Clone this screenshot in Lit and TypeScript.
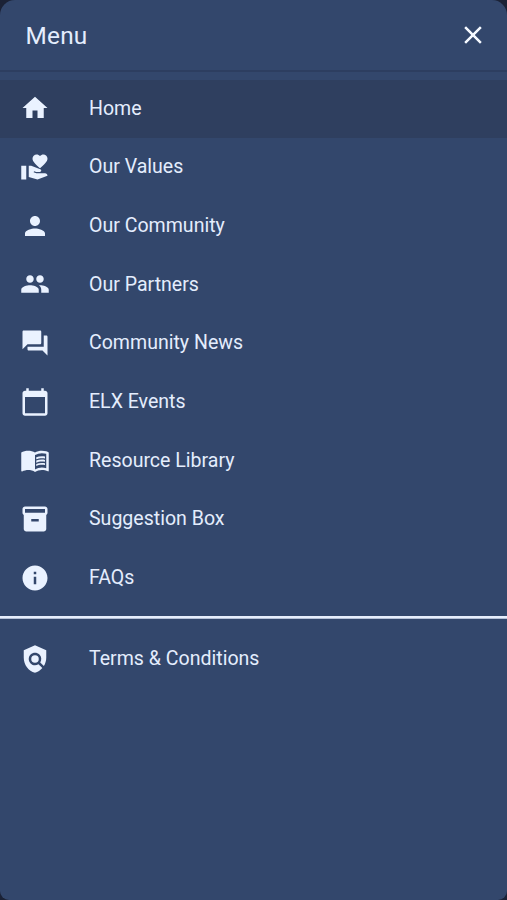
import { LitElement, html, svg, css } from "lit";
import { customElement } from "lit/decorators.js";

const icons: Record<string, string[]> = {
  home: ["M10 20v-6h4v6h5v-8h3L12 3 2 12h3v8z"],
  values: [
    "M1 11h4v11H1z",
    "M16 3.25C16.65 2.49 17.66 2 18.7 2 20.55 2 22 3.45 22 5.3c0 2.27-2.91 4.9-6 7.7-3.09-2.81-6-5.44-6-7.7C10 3.45 11.45 2 13.3 2c1.04 0 2.05.49 2.7 1.25z",
    "M20 17h-7l-2.09-.73.33-.94L13 16h2.82c.65 0 1.18-.53 1.18-1.18 0-.49-.31-.93-.77-1.11L8.97 11H7v9.02L14 22l8.01-3c-.01-1.1-.9-2-2.01-2z",
  ],
  person: ["M12 12c2.21 0 4-1.79 4-4s-1.79-4-4-4-4 1.79-4 4 1.79 4 4 4zm0 2c-2.67 0-8 1.34-8 4v2h16v-2c0-2.66-5.33-4-8-4z"],
  people: ["M16 11c1.66 0 2.99-1.34 2.99-3S17.66 5 16 5c-1.66 0-3 1.34-3 3s1.34 3 3 3zm-8 0c1.66 0 2.99-1.34 2.99-3S9.66 5 8 5C6.34 5 5 6.34 5 8s1.34 3 3 3zm0 2c-2.33 0-7 1.17-7 3.5V19h14v-2.5c0-2.33-4.67-3.5-7-3.5zm8 0c-.29 0-.62.02-.97.05 1.16.84 1.97 1.97 1.97 3.45V19h6v-2.5c0-2.33-4.67-3.5-7-3.5z"],
  forum: ["M21 6h-2v9H6v2c0 .55.45 1 1 1h11l4 4V7c0-.55-.45-1-1-1zm-4 6V3c0-.55-.45-1-1-1H3c-.55 0-1 .45-1 1v14l4-4h10c.55 0 1-.45 1-1z"],
  calendar: ["M20 3h-1V1h-2v2H7V1H5v2H4c-1.1 0-2 .9-2 2v16c0 1.1.9 2 2 2h16c1.1 0 2-.9 2-2V5c0-1.1-.9-2-2-2zm0 18H4V8h16v13z"],
  book: [
    "M21 5c-1.11-.35-2.33-.5-3.5-.5-1.95 0-4.05.4-5.5 1.5-1.45-1.1-3.55-1.5-5.5-1.5S2.45 4.9 1 6v14.65c0 .25.25.5.5.5.1 0 .15-.05.25-.05C3.1 20.45 5.05 20 6.5 20c1.95 0 4.05.4 5.5 1.5 1.35-.85 3.8-1.5 5.5-1.5 1.65 0 3.35.3 4.75 1.05.1.05.15.05.25.05.25 0 .5-.25.5-.5V6c-.6-.45-1.25-.75-2-1zm0 13.5c-1.1-.35-2.3-.5-3.5-.5-1.7 0-4.15.65-5.5 1.5V8c1.35-.85 3.8-1.5 5.5-1.5 1.2 0 2.4.15 3.5.5v11.5z",
    "M17.5 10.5c.88 0 1.73.09 2.5.26V9.24c-.79-.15-1.64-.24-2.5-.24-1.7 0-3.24.29-4.5.83v1.66c1.13-.64 2.7-.99 4.5-.99z",
    "M13 12.49v1.66c1.13-.64 2.7-.99 4.5-.99.88 0 1.73.09 2.5.26V11.9c-.79-.15-1.64-.24-2.5-.24-1.7 0-3.24.3-4.5.83z",
    "M17.5 14.33c-1.7 0-3.24.29-4.5.83v1.66c1.13-.64 2.7-.99 4.5-.99.88 0 1.73.09 2.5.26v-1.52c-.79-.16-1.64-.24-2.5-.24z",
  ],
  box: ["M20 2H4c-1 0-2 .9-2 2v3.01c0 .72.43 1.34 1 1.69V20c0 1.1 1.1 2 2 2h14c.9 0 2-.9 2-2V8.7c.57-.35 1-.97 1-1.69V4c0-1.1-1-2-2-2zm-5 12H9v-2h6v2zm5-7H4V4h16v3z"],
  info: ["M12 2C6.48 2 2 6.48 2 12s4.48 10 10 10 10-4.48 10-10S17.52 2 12 2zm1 15h-2v-6h2v6zm0-8h-2V7h2v2z"],
  policy: [
    "M21 5l-9-4-9 4v6c0 5.55 3.84 10.74 9 12 2.3-.56 4.33-1.9 5.88-3.71l-3.12-3.12c-1.94 1.29-4.58 1.07-6.29-.64-1.95-1.95-1.95-5.12 0-7.07 1.95-1.95 5.12-1.95 7.07 0 1.71 1.71 1.92 4.35.64 6.29l2.9 2.9C20.29 15.69 21 13.38 21 11V5z",
    "M12 9a3 3 0 1 0 0 6 3 3 0 0 0 0-6z",
  ],
  close: ["M19 6.41 17.59 5 12 10.59 6.41 5 5 6.41 10.59 12 5 17.59 6.41 19 12 13.41 17.59 19 19 17.59 13.41 12z"],
};

const icon = (name: string) => html`<svg class="icon" viewBox="0 0 24 24" aria-hidden="true">
  ${icons[name].map((d) => svg`<path d=${d}></path>`)}
</svg>`;

const primary: [string, string][] = [
  ["home", "Home"],
  ["values", "Our Values"],
  ["person", "Our Community"],
  ["people", "Our Partners"],
  ["forum", "Community News"],
  ["calendar", "ELX Events"],
  ["book", "Resource Library"],
  ["box", "Suggestion Box"],
  ["info", "FAQs"],
];

@customElement("app-root")
export class AppRoot extends LitElement {
  static styles = css`
    :host {
      display: block;
      height: 100vh;
      background: #1b2236;
      font-family: Roboto, "Liberation Sans", sans-serif;
      color: #e4edfd;
    }
    .panel {
      box-sizing: border-box;
      height: 100%;
      display: flex;
      flex-direction: column;
      background: #33476c;
      border-radius: 15px 15px 9px 9px;
      overflow: hidden;
    }
    .header {
      box-sizing: border-box;
      flex: none;
      height: 71.5px;
      padding: 1px 19.5px 0 25.5px;
      display: flex;
      align-items: center;
      justify-content: space-between;
      border-bottom: 2px solid #2d3e60;
    }
    .title {
      margin: 1px 0 0;
      font-size: 24.4px;
      font-weight: 400;
      line-height: 30px;
      letter-spacing: 0.2px;
    }
    .close {
      display: flex;
      padding: 0;
      border: 0;
      background: none;
      color: #f4f8ff;
    }
    .icon {
      display: block;
      flex: none;
      width: 30px;
      height: 30px;
      fill: currentColor;
    }
    .list {
      flex: none;
      margin: 0;
      padding: 8px 0 9px;
      list-style: none;
    }
    .second {
      padding-top: 10.5px;
    }
    .item {
      box-sizing: border-box;
      height: 58.67px;
      padding: 0 20px;
      display: flex;
      align-items: center;
      gap: 39px;
      font-size: 19.56px;
      line-height: 28px;
    }
    .item .icon {
      margin-bottom: 1px;
      color: #eaf2ff;
    }
    .active {
      background: #2f3f5f;
    }
    .rule {
      box-sizing: border-box;
      flex: none;
      height: 3px;
      margin: 0;
      border: 0;
      border-bottom: 1px solid #b4c0d6;
      background: #e6eefc;
    }
  `;

  render() {
    return html`
      <nav class="panel">
        <header class="header">
          <h1 class="title">Menu</h1>
          <button class="close" aria-label="Close">${icon("close")}</button>
        </header>
        <ul class="list">
          ${primary.map(
            ([name, label], i) => html`<li class="item ${i === 0 ? "active" : ""}">${icon(name)}<span>${label}</span></li>`
          )}
        </ul>
        <hr class="rule" />
        <ul class="list second">
          <li class="item">${icon("policy")}<span>Terms &amp; Conditions</span></li>
        </ul>
      </nav>
    `;
  }
}
